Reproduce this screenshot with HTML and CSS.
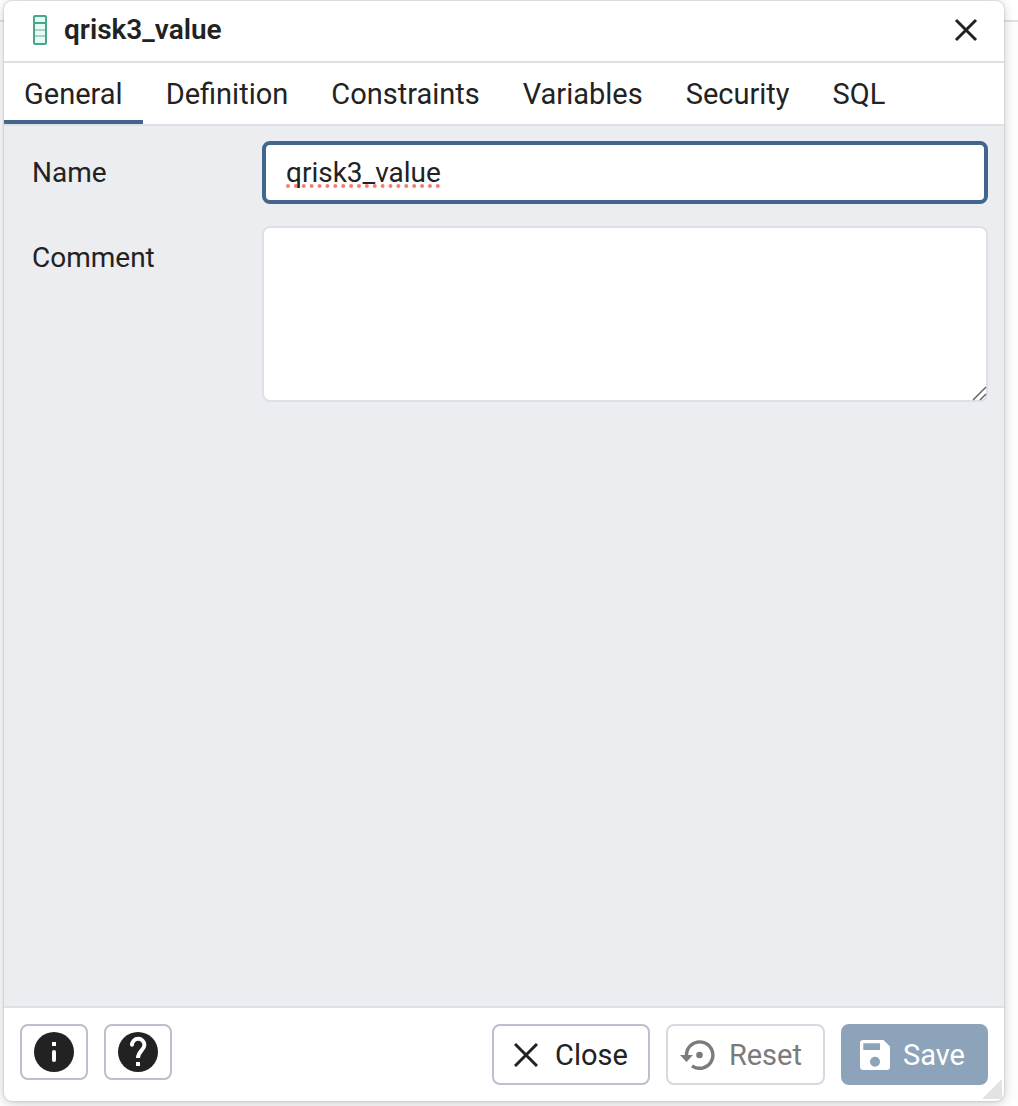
FILE: index.html
```html
<!DOCTYPE html>
<html lang="en">
<head>
<meta charset="utf-8">
<title>qrisk3_value</title>
<link rel="stylesheet" href="styles.css">
</head>
<body>
<main class="dialog" role="dialog" aria-labelledby="dialog-title">
  <header class="dialog-header">
    <svg class="column-icon" viewBox="0 0 16 32" aria-hidden="true">
      <rect x="2" y="2" width="12" height="28" rx="1" fill="#e3fdf6" stroke="#4aa58a" stroke-width="2"/>
      <path d="M3 16h10M3 22h10" stroke="#b5cdc6" stroke-width="2"/>
      <path d="M2 9h12" stroke="#4aa58a" stroke-width="2"/>
    </svg>
    <h1 class="dialog-title" id="dialog-title">qrisk3_value</h1>
    <button class="header-close" type="button" aria-label="Close dialog">
      <svg class="cross" viewBox="0 0 24 24" aria-hidden="true"><path d="M2 2L22 22M22 2L2 22"/></svg>
    </button>
  </header>
  <nav class="tabs" role="tablist">
    <button class="tab tab-active" type="button" role="tab" aria-selected="true">General</button>
    <button class="tab" type="button" role="tab">Definition</button>
    <button class="tab" type="button" role="tab">Constraints</button>
    <button class="tab" type="button" role="tab">Variables</button>
    <button class="tab" type="button" role="tab">Security</button>
    <button class="tab" type="button" role="tab">SQL</button>
  </nav>
  <form class="form">
    <div class="row">
      <label class="label" for="name">Name</label>
      <input class="field field-focused" id="name" type="text" value="qrisk3_value" spellcheck="false">
    </div>
    <div class="row">
      <label class="label" for="comment">Comment</label>
      <div class="comment-box">
        <textarea class="field field-area" id="comment"></textarea>
        <svg class="area-grip" viewBox="0 0 16 16" aria-hidden="true"><path d="M2 15L15 2M9 15L15 9" fill="none" stroke="#666" stroke-width="1.5"/></svg>
      </div>
    </div>
  </form>
  <footer class="footer">
    <button class="button icon-button" type="button" aria-label="Information">
      <svg class="round-icon" viewBox="0 0 40 40" aria-hidden="true">
        <circle cx="20" cy="20" r="20" fill="#222"/>
        <path d="M18 10h4v4h-4z" fill="#fff"/><path d="M20 20v8" stroke="#fff" stroke-width="4" stroke-linecap="round"/>
      </svg>
    </button>
    <button class="button icon-button" type="button" aria-label="Help">
      <svg class="round-icon" viewBox="0 0 40 40" aria-hidden="true">
        <circle cx="20" cy="20" r="20" fill="#222"/>
        <path d="M14 13a6.200 6.200 0 0 1 12.400 0c0 5-6.400 6-6.400 13" fill="none" stroke="#fff" stroke-width="4"/>
        <circle cx="14" cy="12.800" r="2" fill="#fff"/><path d="M18 30h4v4h-4z" fill="#fff"/>
      </svg>
    </button>
    <span class="spacer"></span>
    <button class="button close-button" type="button">
      <svg class="cross" viewBox="0 0 24 24" aria-hidden="true"><path d="M1 1L23 23M23 1L1 23"/></svg>
      Close
    </button>
    <button class="button reset-button" type="button" disabled>
      <svg class="reset-icon" viewBox="0 0 36 30" aria-hidden="true">
        <path d="M6.500 15.500A13.200 13.200 0 1 1 12 25.800" fill="none" stroke="#7b7b7b" stroke-width="3.400"/>
        <path d="M0 15h13l-6.500 7z" fill="#7b7b7b"/><circle cx="19.500" cy="15" r="3.300" fill="#7b7b7b"/>
      </svg>
      Reset
    </button>
    <button class="button save-button" type="button" disabled>
      <svg class="save-icon" viewBox="0 0 30 30" aria-hidden="true">
        <path fill="#fff" fill-rule="evenodd" d="M3.300 0H23.500L30 6.500V26.700A3.300 3.300 0 0 1 26.700 30H3.300A3.300 3.300 0 0 1 0 26.700V3.300A3.300 3.300 0 0 1 3.300 0ZM3.300 3.300V10H20V3.300ZM15 16.700a5 5 0 1 0 0 10 5 5 0 0 0 0-10Z"/>
      </svg>
      Save
    </button>
  </footer>
  <svg class="dialog-grip" viewBox="0 0 20 20" aria-hidden="true"><path d="M20 0V20H0z" fill="#e3e3e3"/></svg>
</main>
</body>
</html>
```
FILE: styles.css
```css
* {
  box-sizing: border-box;
}

body {
  margin: 0;
  padding: 1px 14px 5px 4px;
  min-height: 100vh;
  display: flex;
  background: linear-gradient(#fff 20px, #dfe0e7 20px, #dfe0e7 22px, #fdfdfd 22px);
  color: #222;
  font-family: Roboto, "Liberation Sans", sans-serif;
  font-size: 28px;
  line-height: 32px;
}

button,
input,
textarea {
  font: inherit;
  color: inherit;
  margin: 0;
}

svg {
  display: block;
  flex: none;
}

.dialog {
  position: relative;
  flex: 1;
  min-width: 0;
  display: flex;
  flex-direction: column;
  background: #fff;
  border-radius: 8px;
  box-shadow: 0 0 2px #aaa, 0 2px 12px rgba(0, 0, 0, 0.2);
}

.dialog-header {
  height: 62px;
  padding: 0 26px 2px 28px;
  display: flex;
  align-items: center;
  gap: 16px;
  border-bottom: 2px solid #dfe0e7;
}

.column-icon {
  width: 16px;
  height: 32px;
}

.dialog-title {
  flex: 1;
  margin: 0;
  font-size: 28px;
  font-weight: 600;
}

.header-close {
  padding: 0;
  border: 0;
  background: none;
}

.cross {
  width: 24px;
  height: 24px;
  fill: none;
  stroke: #222;
  stroke-width: 3;
}

.tabs {
  display: flex;
  gap: 3px;
  height: 63px;
  border-bottom: 2px solid #dfe0e7;
}

.tab {
  padding: 4px 20px 0;
  border: 0;
  border-bottom: 4px solid transparent;
  background: none;
  font-size: 29px;
}

.tab-active {
  border-bottom-color: #41658b;
}

.form {
  flex: 1;
  padding: 15px 16px;
  display: flex;
  flex-direction: column;
  gap: 22px;
  background: #ecedf1;
}

.row {
  display: grid;
  grid-template-columns: 1fr 3fr;
}

.label {
  padding: 16px 12px 0;
}

.field {
  display: block;
  width: 100%;
  height: 63px;
  padding: 0 22px;
  border: 2px solid #dfe0e7;
  border-radius: 8px;
  outline: 0;
  background: #fff;
}

.field-focused {
  padding: 0 20px;
  border: 4px solid #41658b;
  text-decoration: underline dotted 4px #f37c74;
  text-decoration-skip-ink: none;
  text-underline-offset: 2px;
}

.comment-box {
  position: relative;
}

.field-area {
  height: 176px;
  padding: 16px 22px;
  resize: none;
}

.area-grip {
  position: absolute;
  right: 1px;
  bottom: 1px;
  width: 16px;
  height: 16px;
}

.footer {
  padding: 16px;
  display: flex;
  align-items: flex-start;
  gap: 16px;
  border-top: 2px solid #dfe0e7;
  border-radius: 0 0 8px 8px;
}

.spacer {
  flex: 1;
}

.button {
  height: 61px;
  padding: 0 20px;
  display: flex;
  align-items: center;
  gap: 17px;
  border: 2px solid #bbbfce;
  border-radius: 8px;
  background: #fff;
  font-size: 29px;
}

.icon-button {
  height: 56px;
  padding: 0 12px;
}

.round-icon {
  width: 40px;
  height: 40px;
}

.reset-button {
  padding: 0 21px 0 12px;
  gap: 13px;
  border-color: #d6d9e2;
  color: #7b7b7b;
}

.reset-icon {
  width: 36px;
  height: 30px;
}

.save-button {
  padding: 0 21px 0 17px;
  gap: 13px;
  border-color: #8da3ba;
  background: #8da3ba;
  color: #fff;
}

.save-icon {
  width: 30px;
  height: 30px;
}

.dialog-grip {
  position: absolute;
  right: 2px;
  bottom: 2px;
  width: 20px;
  height: 20px;
}
```
